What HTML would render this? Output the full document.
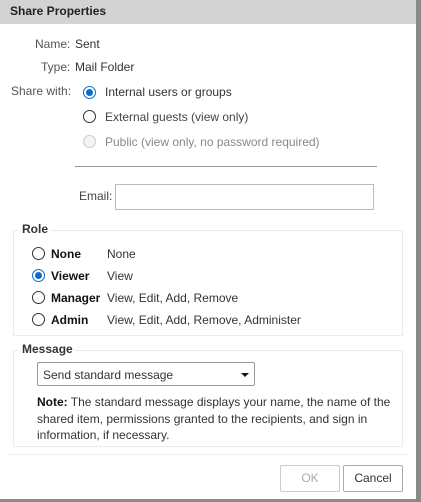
<!DOCTYPE html>
<html><head><style>
*{box-sizing:border-box;margin:0;padding:0}
body{width:421px;height:502px;background:#fff;font-family:"Liberation Sans",sans-serif;font-size:12px;color:#333;position:relative;overflow:hidden}
.a{position:absolute;white-space:nowrap;line-height:14px}
.r{position:absolute;width:13px;height:13px;border:1px solid #333;border-radius:50%;background:#fff}
.r.on{border-color:#0a6ed1}
.r.on::after{content:"";position:absolute;left:2px;top:2px;width:7px;height:7px;border-radius:50%;background:#0a6ed1}
.r.dis{border-color:#ccc;background:#f4f4f4}
.fs{position:absolute;border:1px solid #ececec}
.b{font-weight:bold;color:#111}
</style></head><body>
<div style="position:absolute;left:0;top:0;width:416px;height:24px;background:#d3d3d3"></div>
<div class="a b" style="left:10px;top:4px;color:#222">Share Properties</div>
<div style="position:absolute;left:416px;top:0;width:5px;height:502px;background:#8a8a8a"></div>
<div style="position:absolute;left:0;top:499px;width:421px;height:3px;background:#8a8a8a"></div>

<div class="a" style="left:35px;top:37px;color:#555">Name:</div>
<div class="a" style="left:75px;top:37px">Sent</div>
<div class="a" style="left:41px;top:60px;color:#555">Type:</div>
<div class="a" style="left:75px;top:60px">Mail Folder</div>
<div class="a" style="left:11px;top:84px;color:#555">Share with:</div>
<div class="r on" style="left:83px;top:86px"></div>
<div class="a" style="left:105px;top:85px">Internal users or groups</div>
<div class="r" style="left:83px;top:110px"></div>
<div class="a" style="left:105px;top:110px;color:#444">External guests (view only)</div>
<div class="r dis" style="left:83px;top:135px"></div>
<div class="a" style="left:105px;top:135px;color:#888">Public (view only, no password required)</div>
<div style="position:absolute;left:75px;top:166px;width:302px;height:1px;background:#999"></div>
<div class="a" style="left:79px;top:189px;color:#444">Email:</div>
<div style="position:absolute;left:115px;top:184px;width:259px;height:26px;border:1px solid #bbb"></div>

<div class="fs" style="left:13px;top:230px;width:390px;height:106px"></div>
<div class="a b" style="left:20px;top:222px;background:#fff;padding:0 2px;color:#333">Role</div>
<div class="r" style="left:32px;top:247px"></div><div class="a b" style="left:51px;top:247px">None</div><div class="a" style="left:107px;top:247px">None</div>
<div class="r on" style="left:32px;top:269px"></div><div class="a b" style="left:51px;top:269px">Viewer</div><div class="a" style="left:107px;top:269px">View</div>
<div class="r" style="left:32px;top:291px"></div><div class="a b" style="left:51px;top:291px">Manager</div><div class="a" style="left:107px;top:291px">View, Edit, Add, Remove</div>
<div class="r" style="left:32px;top:313px"></div><div class="a b" style="left:51px;top:313px">Admin</div><div class="a" style="left:107px;top:313px">View, Edit, Add, Remove, Administer</div>

<div class="fs" style="left:13px;top:350px;width:390px;height:97px"></div>
<div class="a b" style="left:20px;top:342px;background:#fff;padding:0 2px;color:#333">Message</div>
<div style="position:absolute;left:37px;top:362px;width:218px;height:24px;border:1px solid #999;border-radius:2px"></div>
<div class="a" style="left:43px;top:368px">Send standard message</div>
<div style="position:absolute;left:241px;top:373px;border-left:4px solid transparent;border-right:4px solid transparent;border-top:4px solid #111"></div>
<div class="a" style="left:37px;top:394px;line-height:16.5px;white-space:normal;width:360px"><b style="color:#111">Note:</b> The standard message displays your name, the name of the shared item, permissions granted to the recipients, and sign in information, if necessary.</div>

<div style="position:absolute;left:8px;top:454px;width:400px;height:1px;background:#eee"></div>
<div style="position:absolute;left:280px;top:465px;width:60px;height:27px;border:1px solid #ccc;border-radius:2px;text-align:center;line-height:25px;color:#aaa">OK</div>
<div style="position:absolute;left:343px;top:465px;width:60px;height:27px;border:1px solid #aaa;border-radius:2px;text-align:center;line-height:25px;color:#333">Cancel</div>
</body></html>
